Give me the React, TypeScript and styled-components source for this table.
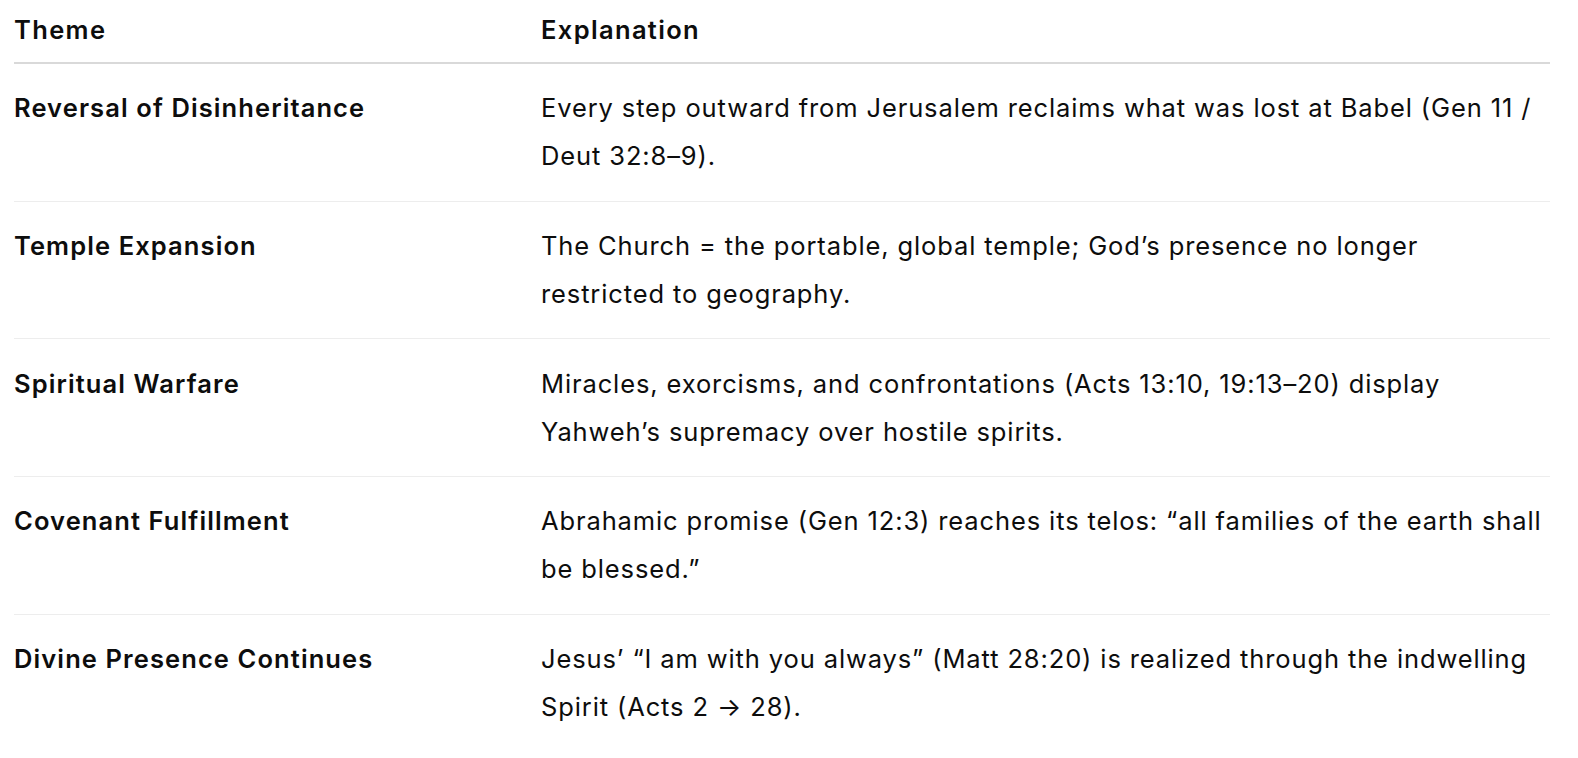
import React from "react";
import styled, { createGlobalStyle } from "styled-components";

const Global = createGlobalStyle`
  html, body { margin: 0; padding: 0; background: #ffffff; }
  body {
    font-family: Inter, "Noto Sans", "Liberation Sans", sans-serif;
    color: #0d0d0d;
    -webkit-font-smoothing: antialiased;
  }
`;

const Wrap = styled.div`
  padding: 0 28px 0 14px;
`;

const Table = styled.table`
  width: 1536px;
  border-collapse: collapse;
  table-layout: fixed;
  font-size: 25.5px;
  line-height: 48px;
  letter-spacing: 0.88px;
`;

const Col = styled.col<{ $w: number }>`
  width: ${(p) => p.$w}px;
`;

const HeadCell = styled.th`
  text-align: left;
  font-weight: 600;
  letter-spacing: 1.35px;
  padding: 6px 10px 8px 0;
  border-bottom: 2px solid #d9d9d9;
  vertical-align: top;
`;

const Row = styled.tr`
  border-bottom: 1px solid #ededed;
  &:last-child { border-bottom: none; }
`;

const ThemeCell = styled.td`
  font-weight: 600;
  letter-spacing: 1.1px;
  padding: 20.33px 10px 20.33px 0;
  vertical-align: top;
`;

const TextCell = styled.td`
  font-weight: 400;
  padding: 20.33px 0 20.33px 0;
  vertical-align: top;
`;

const Keep = styled.span`
  white-space: nowrap;
`;

const rows: [string, React.ReactNode][] = [
  [
    "Reversal of Disinheritance",
    "Every step outward from Jerusalem reclaims what was lost at Babel (Gen 11 / Deut 32:8–9).",
  ],
  [
    "Temple Expansion",
    <>
      The Church = the portable, global temple; God’s presence no longer{" "}
      <Keep>restricted to</Keep> geography.
    </>,
  ],
  [
    "Spiritual Warfare",
    "Miracles, exorcisms, and confrontations (Acts 13:10, 19:13–20) display Yahweh’s supremacy over hostile spirits.",
  ],
  [
    "Covenant Fulfillment",
    "Abrahamic promise (Gen 12:3) reaches its telos: “all families of the earth shall be blessed.”",
  ],
  [
    "Divine Presence Continues",
    "Jesus’ “I am with you always” (Matt 28:20) is realized through the indwelling Spirit (Acts 2 → 28).",
  ],
];

export default function App() {
  return (
    <Wrap>
      <Global />
      <Table>
        <colgroup>
          <Col $w={527} />
          <Col $w={1009} />
        </colgroup>
        <thead>
          <tr>
            <HeadCell>Theme</HeadCell>
            <HeadCell>Explanation</HeadCell>
          </tr>
        </thead>
        <tbody>
          {rows.map(([t, e]) => (
            <Row key={t}>
              <ThemeCell>{t}</ThemeCell>
              <TextCell>{e}</TextCell>
            </Row>
          ))}
        </tbody>
      </Table>
    </Wrap>
  );
}
